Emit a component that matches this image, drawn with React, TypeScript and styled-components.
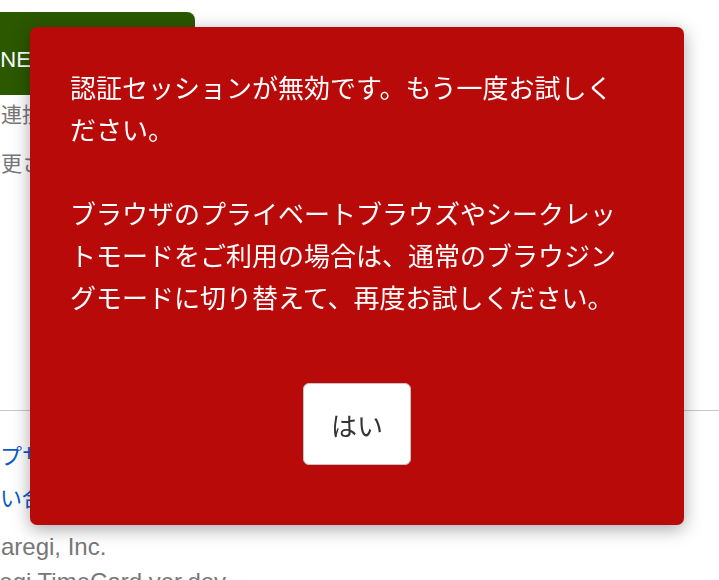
import React from "react";
import styled, { createGlobalStyle } from "styled-components";

const GlobalStyle = createGlobalStyle`
  html, body {
    margin: 0;
    padding: 0;
    background: #fff;
    overflow: hidden;
  }
  body {
    font-family: "Liberation Sans", "Noto Sans CJK JP", sans-serif;
  }
`;

// the page behind the dialog is scrolled a little to the right
const Page = styled.div`
  display: flex;
  flex-direction: column;
  width: calc(100% + 44px);
  margin-left: -44px;
  padding-top: 12px;

  & > * {
    flex-shrink: 0;
  }
`;

const LineButton = styled.div`
  display: flex;
  align-items: center;
  width: 239px;
  height: 83px;
  box-sizing: border-box;
  padding: 6px 0 0 26px;
  background: #2c5800;
  border-radius: 8px;
  color: #fff;
  font-size: 22px;
`;

const Notice = styled.div`
  display: flex;
  flex-direction: column;
  gap: 9px;
  padding-left: 24px;
  color: #777;
  font-size: 21px;
  line-height: 40px;
`;

const Divider = styled.hr`
  margin: 226px 0 0;
  border: 0;
  border-top: 1px solid #c8c8c8;
`;

const Links = styled.div`
  display: flex;
  flex-direction: column;
  margin-top: 25px;
`;

const LinkText = styled.a`
  color: #0b5cc7;
  font-size: 22px;
  line-height: 42px;
  text-decoration: none;
`;

const Footer = styled.div`
  margin: 9px 0 0 -14px;
  color: #777;
  font-size: 24px;
  line-height: 35px;
  white-space: nowrap;
`;

const FooterLine = styled.div<{ $indent?: number }>`
  padding-left: ${(p) => p.$indent ?? 0}px;
`;

const Dialog = styled.div`
  position: fixed;
  top: 27px;
  left: 30px;
  width: 654px;
  box-sizing: border-box;
  padding: 39px 50px 60px 40px;
  display: flex;
  flex-direction: column;
  align-items: center;
  background: #b90a0a;
  border-radius: 7px;
  box-shadow: 0 4px 18px rgba(0, 0, 0, 0.35);
`;

const Message = styled.div`
  align-self: stretch;
  color: #fff;
  font-family: "Noto Sans CJK JP", sans-serif;
  font-size: 26px;
  line-height: 42px;
  white-space: pre-line;
`;

const OkButton = styled.button`
  margin-top: 65px;
  margin-left: 10px;
  width: 108px;
  height: 82px;
  background: #fff;
  border: 1px solid #c4c4c4;
  border-radius: 6px;
  color: #333;
  font-family: "Noto Sans CJK JP", sans-serif;
  font-size: 26px;
  cursor: pointer;
`;

const message =
  "認証セッションが無効です。もう一度お試しください。\n\nブラウザのプライベートブラウズやシークレットモードをご利用の場合は、通常のブラウジングモードに切り替えて、再度お試しください。";

export default function App() {
  return (
    <>
      <GlobalStyle />
      <Page>
        <LineButton>LINE連携を解除</LineButton>
        <Notice>
          <div>※連携中のアカウント</div>
          <div>変更される場合は</div>
        </Notice>
        <Divider />
        <Links>
          <LinkText href="#">ヘルプサイト</LinkText>
          <LinkText href="#">お問い合わせ</LinkText>
        </Links>
        <Footer>
          <FooterLine $indent={23}>Smaregi, Inc.</FooterLine>
          <FooterLine>Smaregi TimeCard ver.dev</FooterLine>
        </Footer>
      </Page>
      <Dialog role="alertdialog">
        <Message>{message}</Message>
        <OkButton>はい</OkButton>
      </Dialog>
    </>
  );
}
